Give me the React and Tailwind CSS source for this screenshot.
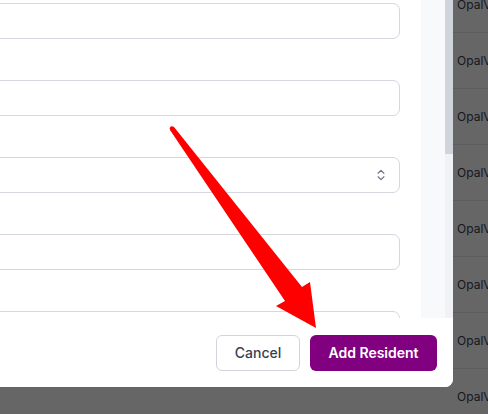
import { ChevronsUpDown } from "lucide-react";

/* Modal "Add Resident" sobre la tabla, con flecha de anotación. */

const rows = Array.from({ length: 8 }, (_, i) => i);
const fields = ["text", "text", "select", "text", "text"];

export default function App() {
  return (
    <div className="relative h-[414px] w-[488px] overflow-hidden bg-white font-['Inter',sans-serif]">
      {/* Tabla detrás del overlay */}
      <div className="-mt-[23px] flex flex-col">
        {rows.map((i) => (
          <div
            key={i}
            className="grid h-[56px] grid-cols-[441px_1fr] items-center border-b border-gray-200"
          >
            <div />
            <div className="whitespace-nowrap px-4 text-xs text-gray-700">
              OpalView Residences
            </div>
          </div>
        ))}
      </div>

      {/* Overlay */}
      <div className="absolute inset-0 bg-black/60" />

      {/* Modal */}
      <div className="absolute left-[-40px] top-[-12px] flex h-[399px] w-[493px] flex-col overflow-hidden rounded-lg bg-white">
        {/* Cuerpo con scroll */}
        <div className="flex min-h-0 flex-1 overflow-hidden">
          <div className="flex flex-1 flex-col gap-[41px] bg-white pl-4 pr-[21px] pt-[15px]">
            {fields.map((type, i) => (
              <div key={i} className="relative h-[36px] shrink-0 rounded-[7px] border border-[#d5d7de] bg-white">
                {type === "select" && (
                  <ChevronsUpDown
                    size={14}
                    strokeWidth={2}
                    className="absolute right-[11px] top-1/2 -translate-y-1/2 text-gray-500"
                  />
                )}
              </div>
            ))}
          </div>
          <div className="w-[24px] bg-[#f8f9fb]" />
          {/* Scrollbar */}
          <div className="flex w-[8px] flex-col">
            <div className="h-[166px] bg-[#d0d4db]" />
            <div className="flex-1 bg-[#f1f2f5]" />
          </div>
        </div>

        {/* Footer */}
        <div className="flex h-[69px] shrink-0 items-center justify-end gap-[10px] bg-white pr-4">
          <button className="h-9 w-[84px] rounded-md border border-[#d1d5db] bg-white text-sm font-medium text-[#374151]">
            Cancel
          </button>
          <button className="h-9 w-[127px] rounded-md bg-[#800080] text-sm font-semibold text-white">
            Add Resident
          </button>
        </div>
      </div>

      {/* Flecha de anotación */}
      <svg
        className="pointer-events-none absolute inset-0"
        width="488"
        height="414"
        viewBox="0 0 488 414"
      >
        <circle cx="172" cy="128.5" r="2.3" fill="#ff0000" />
        <polygon
          points="170,130 174,127 302,287 310,282 316,328 276,306 285,301"
          fill="#ff0000"
        />
      </svg>
    </div>
  );
}
